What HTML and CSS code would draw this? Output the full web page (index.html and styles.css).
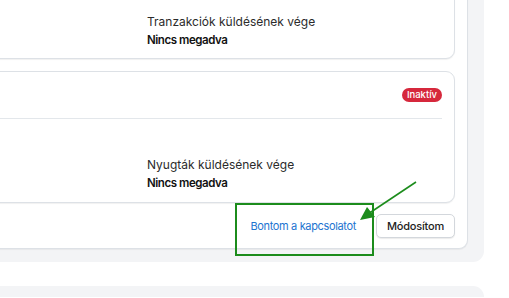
FILE: index.html
```html
<!DOCTYPE html>
<html lang="hu">
<head>
<meta charset="UTF-8" />
<meta name="viewport" content="width=device-width, initial-scale=1.0" />
<title>Kapcsolat</title>
<link rel="stylesheet" href="styles.css">
</head>
<body>
<div class="panel">
  <div class="outer">
    <div class="card first">
      <div class="grid">
        <div></div>
        <div>
          <div class="label">Tranzakciók küldésének vége</div>
          <div class="value">Nincs megadva</div>
        </div>
      </div>
    </div>

    <div class="card second">
      <div class="card-head">
        <span class="badge">Inaktív</span>
      </div>
      <div class="card-body grid">
        <div></div>
        <div>
          <div class="label">Nyugták küldésének vége</div>
          <div class="value">Nincs megadva</div>
        </div>
      </div>
    </div>

    <div class="actions">
      <a class="link" href="#">Bontom a kapcsolatot</a>
      <button class="btn">Módosítom</button>
    </div>
  </div>
</div>
<div class="panel next"></div>

<div class="mark"></div>
<svg class="arrow" width="70" height="50" viewBox="0 0 70 50">
  <line x1="62" y1="3" x2="14" y2="35" stroke="#1c8c1c" stroke-width="1.6" />
  <polygon points="6,41 13,28 21,38" fill="#1c8c1c" />
</svg>
</body>
</html>
```

FILE: styles.css
```css
* {
box-sizing: border-box;
}
body {
margin: 0;
background: #fff;
font-family: Inter, "Noto Sans", sans-serif;
color: #222;
position: relative;
overflow: hidden;
height: 298px;
}
.panel {
width: 784px;
margin-left: -300px;
margin-top: -30px;
background: #f3f4f6;
padding: 0 16px 13px 16px;
border-radius: 0 0 11px 0;
}
.panel.next {
margin-top: 24px;
height: 11px;
padding: 0;
border-radius: 0 11px 0 0;
}
.outer {
background: #fff;
border: 1px solid #dde1e6;
border-top: 0;
border-radius: 0 0 9px 0;
padding: 13px 12px 10px 12px;
box-shadow: 0 1px 1px rgba(0,0,0,0.05);
}
.card {
border: 1px solid #dde1e6;
border-radius: 9px;
background: #fff;
box-shadow: 0 1px 1px rgba(0,0,0,0.06);
}
.card.first {
padding: 29px 12px 9px 12px;
}
.card.second {
margin-top: 12px;
}
.grid {
display: grid;
grid-template-columns: 405px 1fr;
}
.label {
font-size: 12px;
line-height: 18px;
color: #2b2b2b;
}
.value {
font-size: 11.5px;
line-height: 18px;
font-weight: 600;
letter-spacing: -0.45px;
color: #111;
}
.card-head {
height: 47px;
display: flex;
align-items: center;
justify-content: flex-end;
margin: 0 12px;
border-bottom: 1px solid #e3e7eb;
}
.badge {
background: #d6283c;
color: #fff;
font-size: 9.5px;
line-height: 14px;
height: 14px;
padding: 0 5px;
border-radius: 8px;
font-weight: 500;
}
.card-body {
padding: 37px 12px 10px 12px;
}
.actions {
display: flex;
justify-content: flex-end;
align-items: center;
margin-top: 11px;
}
.link {
font-size: 11px;
letter-spacing: -0.35px;
color: #1d74d0;
text-decoration: none;
margin-right: 20px;
}
.btn {
font-family: inherit;
font-size: 11px;
letter-spacing: -0.2px;
font-weight: 500;
color: #222;
background: #fff;
border: 1px solid #d3d7dc;
border-radius: 5px;
height: 24px;
width: 79px;
padding: 0;
box-shadow: 0 1px 1px rgba(0,0,0,0.08);
}
.mark {
position: absolute;
left: 235px;
top: 203px;
width: 139px;
height: 53px;
border: 2px solid #1c8c1c;
}
.arrow {
position: absolute;
left: 354px;
top: 179px;
}
```
